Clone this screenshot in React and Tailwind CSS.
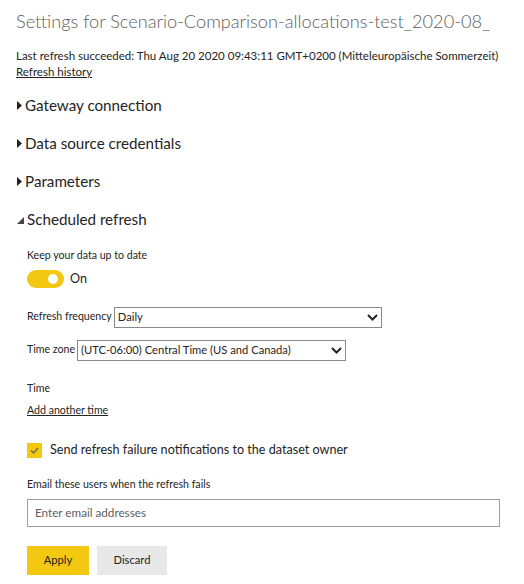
import React from "react";

const font = { fontFamily: 'Lato, "Open Sans", sans-serif' };

function Caret({ open }) {
  if (open) {
    return (
      <svg width="7" height="7" viewBox="0 0 7 7" className="mr-[3px] mt-[3px]">
        <polygon points="7,0 7,7 0,7" fill="#444" />
      </svg>
    );
  }
  return (
    <svg width="6" height="9" viewBox="0 0 6 9" className="mr-[2px]">
      <polygon points="0,0 5,4.5 0,9" fill="#222" />
    </svg>
  );
}

function Section({ title, open }) {
  return (
    <div className="flex h-[38px] items-center pl-[1px] text-[15.2px] text-[#252423]">
      <Caret open={open} />
      <span>{title}</span>
    </div>
  );
}

function Chevron() {
  return (
    <svg width="11" height="7" viewBox="0 0 11 7">
      <polyline points="1,1 5.5,5.5 10,1" fill="none" stroke="#252423" strokeWidth="2" />
    </svg>
  );
}

function Select({ value, width }) {
  return (
    <div
      className="flex h-[21px] items-center justify-between border border-[#8a8886] bg-white pl-[3px] pr-[3px] text-[11.2px] text-[#252423]"
      style={{ width }}
    >
      <span>{value}</span>
      <Chevron />
    </div>
  );
}

export default function App() {
  return (
    <div className="min-h-[584px] w-[524px] bg-white pl-4 pt-[8px]" style={font}>
      <h1 className="whitespace-nowrap text-[18.2px] font-light leading-[26px] text-[#605e5c]">
        Settings for Scenario-Comparison-allocations-test_2020-08_
      </h1>
      <div className="mt-[14px] text-[11.5px] leading-[16px] text-[#252423]">
        <div className="whitespace-nowrap">Last refresh succeeded: Thu Aug 20 2020 09:43:11 GMT+0200 (Mitteleuropäische Sommerzeit)</div>
        <a className="underline">Refresh history</a>
      </div>

      <div className="mt-[6px]">
        <Section title="Gateway connection" />
        <Section title="Data source credentials" />
        <Section title="Parameters" />
        <Section title="Scheduled refresh" open />
      </div>

      <div className="pl-[11px] text-[10.6px] text-[#252423]">
        <div className="mt-[9px] leading-[16px]">Keep your data up to date</div>
        <div className="mt-[7px] flex items-center gap-[6px]">
          <div className="flex h-[18px] w-[37px] items-center justify-end rounded-full bg-[#f2c811] pr-[6px]">
            <div className="h-[10px] w-[10px] rounded-full bg-white" />
          </div>
          <span className="text-[12.6px]">On</span>
        </div>

        <div className="mt-[18px] flex items-center gap-[2px]">
          <span>Refresh frequency</span>
          <Select value="Daily" width="268px" />
        </div>
        <div className="mt-[12px] flex items-center gap-[2px]">
          <span>Time zone</span>
          <Select value="(UTC-06:00) Central Time (US and Canada)" width="269px" />
        </div>

        <div className="mt-[19px] leading-[16px]">Time</div>
        <a className="mt-[6px] block w-fit leading-[16px] underline">Add another time</a>

        <div className="mt-[24px] flex h-[18px] items-center gap-[8px]">
          <div className="flex h-[15px] w-[15px] items-center justify-center bg-[#f2c811]">
            <svg width="9" height="7" viewBox="0 0 9 7">
              <polyline points="1,3.5 3.5,6 8,1" fill="none" stroke="#605e5c" strokeWidth="1.2" />
            </svg>
          </div>
          <span className="text-[12.6px]">Send refresh failure notifications to the dataset owner</span>
        </div>

        <div className="mt-[16px] leading-[16px]">Email these users when the refresh fails</div>
        <div className="mt-[7px] flex h-[28px] w-[473px] items-center border border-[#a19f9d] px-[7px] text-[11.7px] text-[#605e5c]">
          Enter email addresses
        </div>

        <div className="mt-[19px] flex gap-[8px] text-[11.2px]">
          <button className="h-[29px] w-[62px] bg-[#f2c811] text-[#252423]">Apply</button>
          <button className="h-[29px] w-[70px] bg-[#e8e8e8] text-[#252423]">Discard</button>
        </div>
      </div>
    </div>
  );
}
